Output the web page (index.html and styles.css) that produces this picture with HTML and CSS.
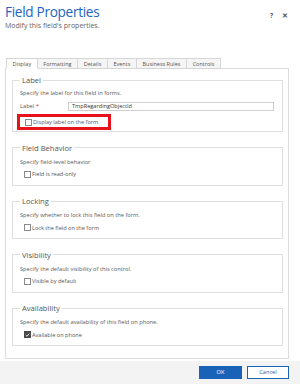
FILE: index.html
```html
<!DOCTYPE html>
<html>
<head>
<meta charset="utf-8">
<link rel="stylesheet" href="styles.css">
</head>
<body>
<div class="page">
  <header class="header">
    <div class="titles">
      <h1 class="title">Field Properties</h1>
      <p class="subtitle">Modify this field's properties.</p>
    </div>
    <div class="hdr-icons">
      <span class="hdr-icon">?</span>
      <span class="hdr-icon">✕</span>
    </div>
  </header>

  <nav class="tabs">
    <span class="tab active">Display</span>
    <span class="tab">Formatting</span>
    <span class="tab">Details</span>
    <span class="tab">Events</span>
    <span class="tab">Business Rules</span>
    <span class="tab">Controls</span>
  </nav>

  <section class="panel">
    <fieldset class="group group-label">
      <legend>Label</legend>
      <div class="desc">Specify the label for this field in forms.</div>
      <div class="field-row">
        <span class="field-label">Label <span class="req">*</span></span>
        <span class="input">TmpRegardingObjectId</span>
      </div>
      <div class="highlight">
        <span class="check"></span><span class="check-text">Display label on the form</span>
      </div>
    </fieldset>

    <fieldset class="group">
      <legend>Field Behavior</legend>
      <div class="desc">Specify field-level behavior</div>
      <div class="check-row"><span class="check"></span><span class="check-text">Field is read-only</span></div>
    </fieldset>

    <fieldset class="group">
      <legend>Locking</legend>
      <div class="desc">Specify whether to lock this field on the form.</div>
      <div class="check-row"><span class="check"></span><span class="check-text">Lock the field on the form</span></div>
    </fieldset>

    <fieldset class="group">
      <legend>Visibility</legend>
      <div class="desc">Specify the default visibility of this control.</div>
      <div class="check-row"><span class="check"></span><span class="check-text">Visible by default</span></div>
    </fieldset>

    <fieldset class="group">
      <legend>Availability</legend>
      <div class="desc">Specify the default availability of this field on phone.</div>
      <div class="check-row"><span class="check checked"><svg viewBox="0 0 8 8" width="6" height="6"><path d="M1.3 4.2 L3.2 6 L6.8 1.8" fill="none" stroke="#fff" stroke-width="1.4"/></svg></span><span class="check-text">Available on phone</span></div>
    </fieldset>
  </section>

  <footer class="footer">
    <button class="btn btn-ok">OK</button>
    <button class="btn btn-cancel">Cancel</button>
  </footer>
</div>
</body>
</html>
```

FILE: styles.css
```css
* { box-sizing: border-box; }
html, body { margin: 0; padding: 0; background: #fff; }
body {
  font-family: "Open Sans", "Noto Sans", sans-serif;
  color: #444;
}
.page {
  width: 300px;
  height: 384px;
  display: flex;
  flex-direction: column;
  overflow: hidden;
}
.header {
  height: 58px;
  display: flex;
  justify-content: space-between;
  align-items: flex-start;
  padding: 3px 0 0 5px;
}
.title {
  margin: 0;
  font-size: 13.6px;
  line-height: 17px;
  font-weight: 400;
  color: #2266c4;
  letter-spacing: -0.3px;
}
.subtitle {
  margin: 1px 0 0;
  font-size: 7px;
  line-height: 9px;
  color: #666;
}
.hdr-icons {
  display: flex;
  gap: 9px;
  padding: 8px 12px 0 0;
}
.hdr-icon {
  font-size: 6.5px;
  line-height: 9px;
  color: #555;
  font-weight: 700;
}
.tabs {
  display: flex;
  padding-left: 6px;
  height: 11px;
  position: relative;
  z-index: 1;
}
.tab {
  font-size: 5.5px;
  line-height: 10px;
  height: 11px;
  padding: 0 5.6px;
  border: 1px solid #d6d6d6;
  border-left: none;
  background: #f5f5f5;
  color: #555;
  white-space: nowrap;
}
.tab:first-child { border-left: 1px solid #d6d6d6; }
.tab.active {
  background: #fff;
  border-bottom-color: #fff;
}
.panel {
  margin: -1px 11px 0 5px;
  height: 291px;
  border: 1px solid #dcdcdc;
  padding: 6px 5px 0 6px;
  display: flex;
  flex-direction: column;
  gap: 10.5px;
}
.group {
  margin: 0;
  border: 1px solid #dedede;
  padding: 5px 8px 6px 7px;
  min-width: 0;
}
.group legend {
  font-size: 7.6px;
  line-height: 10px;
  padding: 0 2px;
  margin-left: 0;
  color: #555;
}
.group-label { padding-top: 4px; padding-bottom: 1px; }
.desc {
  font-size: 5.7px;
  line-height: 9px;
  color: #5a5a5a;
  white-space: nowrap;
}
.field-row {
  margin-top: 3px;
  height: 10px;
  display: flex;
  align-items: center;
}
.field-label {
  width: 48px;
  flex: none;
  font-size: 5.7px;
  color: #5a5a5a;
}
.req { color: #e02020; font-size: 6px; }
.input {
  flex: 1;
  height: 9px;
  border: 1px solid #cfcfcf;
  font-size: 5.6px;
  line-height: 7px;
  padding-left: 3px;
  color: #333;
}
.highlight {
  margin-top: 3px;
  margin-left: -3px;
  width: 94px;
  height: 16px;
  border: 3px solid #e8121b;
  display: flex;
  align-items: center;
  padding-left: 5px;
}
.check-row {
  margin-top: 3px;
  height: 9px;
  display: flex;
  align-items: center;
  padding-left: 4px;
}
.check {
  width: 7px;
  height: 7px;
  border: 1px solid #8a8a8a;
  background: #fff;
  flex: none;
  display: flex;
  align-items: center;
  justify-content: center;
}
.check.checked {
  background: #4a4a4a;
  border-color: #4a4a4a;
}
.check-text {
  font-size: 5.6px;
  color: #555;
  margin-left: 1px;
  white-space: nowrap;
}
.footer {
  margin-top: auto;
  height: 23px;
  background: #f3f3f3;
  display: flex;
  justify-content: flex-end;
  align-items: center;
  gap: 5px;
  padding-right: 11px;
}
.btn {
  width: 43px;
  height: 13px;
  font-family: "Open Sans", "Noto Sans", sans-serif;
  font-size: 5.6px;
  line-height: 11px;
  padding: 0;
  border: 1px solid #1862b8;
}
.btn-ok { background: #1862b8; color: #fff; }
.btn-cancel { background: #fff; color: #1862b8; width: 42px; }
```
